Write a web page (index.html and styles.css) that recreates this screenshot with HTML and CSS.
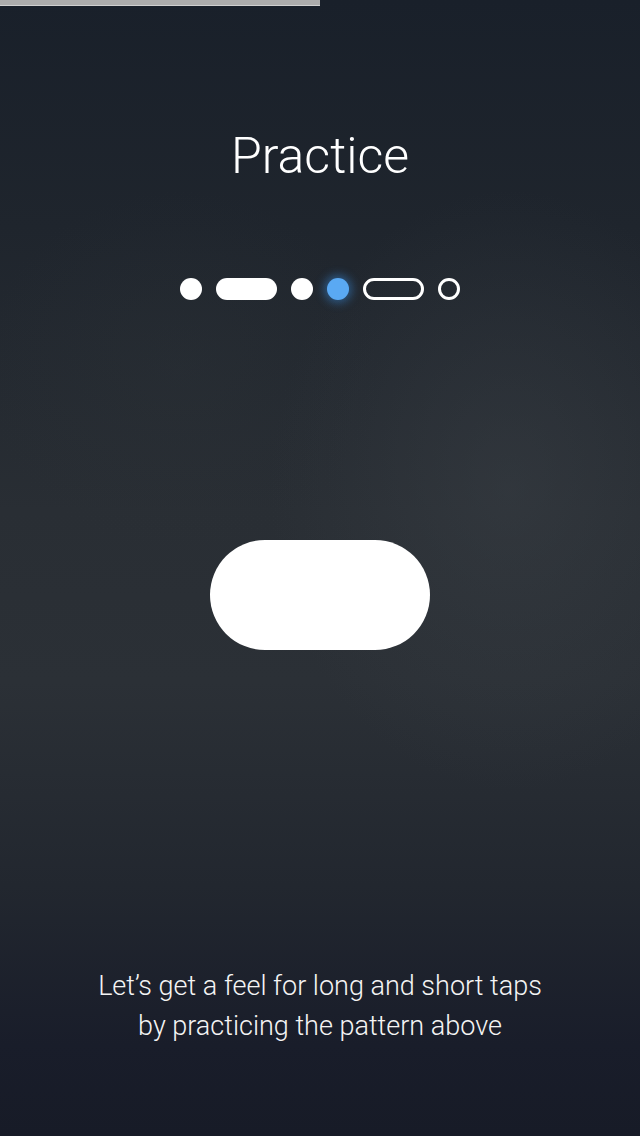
FILE: index.html
```html
<!DOCTYPE html>
<html>
<head>
<meta charset="utf-8">
<link rel="stylesheet" href="styles.css">
</head>
<body>
<div class="screen">
  <div class="progress"><div class="progress-fill"></div></div>
  <h1 class="title">Practice</h1>
  <div class="pattern">
    <span class="dot filled"></span>
    <span class="dash filled"></span>
    <span class="dot filled"></span>
    <span class="dot active"></span>
    <span class="dash outline"></span>
    <span class="dot outline"></span>
  </div>
  <div class="tap-area">
    <div class="tap-pill"></div>
  </div>
  <p class="hint">Let’s get a feel for long and short taps<br>by practicing the pattern above</p>
</div>
</body>
</html>
```
FILE: styles.css
```css
html, body {
  margin: 0;
  padding: 0;
}
body {
  width: 640px;
  height: 1136px;
  overflow: hidden;
  font-family: "Roboto", "Liberation Sans", sans-serif;
  color: #fff;
}
.screen {
  width: 640px;
  height: 1136px;
  display: flex;
  flex-direction: column;
  align-items: center;
  background:
    radial-gradient(ellipse 240px 300px at 510px 490px, rgba(62,68,74,0.4), rgba(62,68,74,0) 100%),
    radial-gradient(ellipse 200px 180px at 180px 370px, rgba(46,52,56,0.25), rgba(46,52,56,0) 100%),
    linear-gradient(180deg, #19202a 0%, #1f252d 20%, #292e34 45%, #2b3036 60%, #22272f 78%, #191d2a 92%, #171b27 100%);
}
.progress {
  align-self: stretch;
  height: 6px;
}
.progress-fill {
  width: 320px;
  height: 5px;
  background: #acacac;
  border-bottom: 1px solid #d0d0d0;
}
.title {
  margin: 114px 0 0;
  font-size: 50px;
  font-weight: 300;
  line-height: 72px;
}
.pattern {
  margin-top: 86px;
  display: flex;
  gap: 14px;
  align-items: center;
}
.dot {
  width: 22px;
  height: 22px;
  border-radius: 50%;
  box-sizing: border-box;
}
.dash {
  width: 61px;
  height: 22px;
  border-radius: 11px;
  box-sizing: border-box;
}
.filled {
  background: #fff;
}
.active {
  background: #5aa9f3;
  box-shadow: 0 0 10px 3px rgba(60, 150, 240, 0.45);
}
.outline {
  border: 3px solid #fff;
}
.tap-area {
  margin-top: 240px;
}
.tap-pill {
  width: 220px;
  height: 110px;
  border-radius: 55px;
  background: #fff;
}
.hint {
  margin: 316px 0 0;
  text-align: center;
  font-size: 27px;
  font-weight: 300;
  line-height: 40px;
  color: #f4f4f4;
}
```
